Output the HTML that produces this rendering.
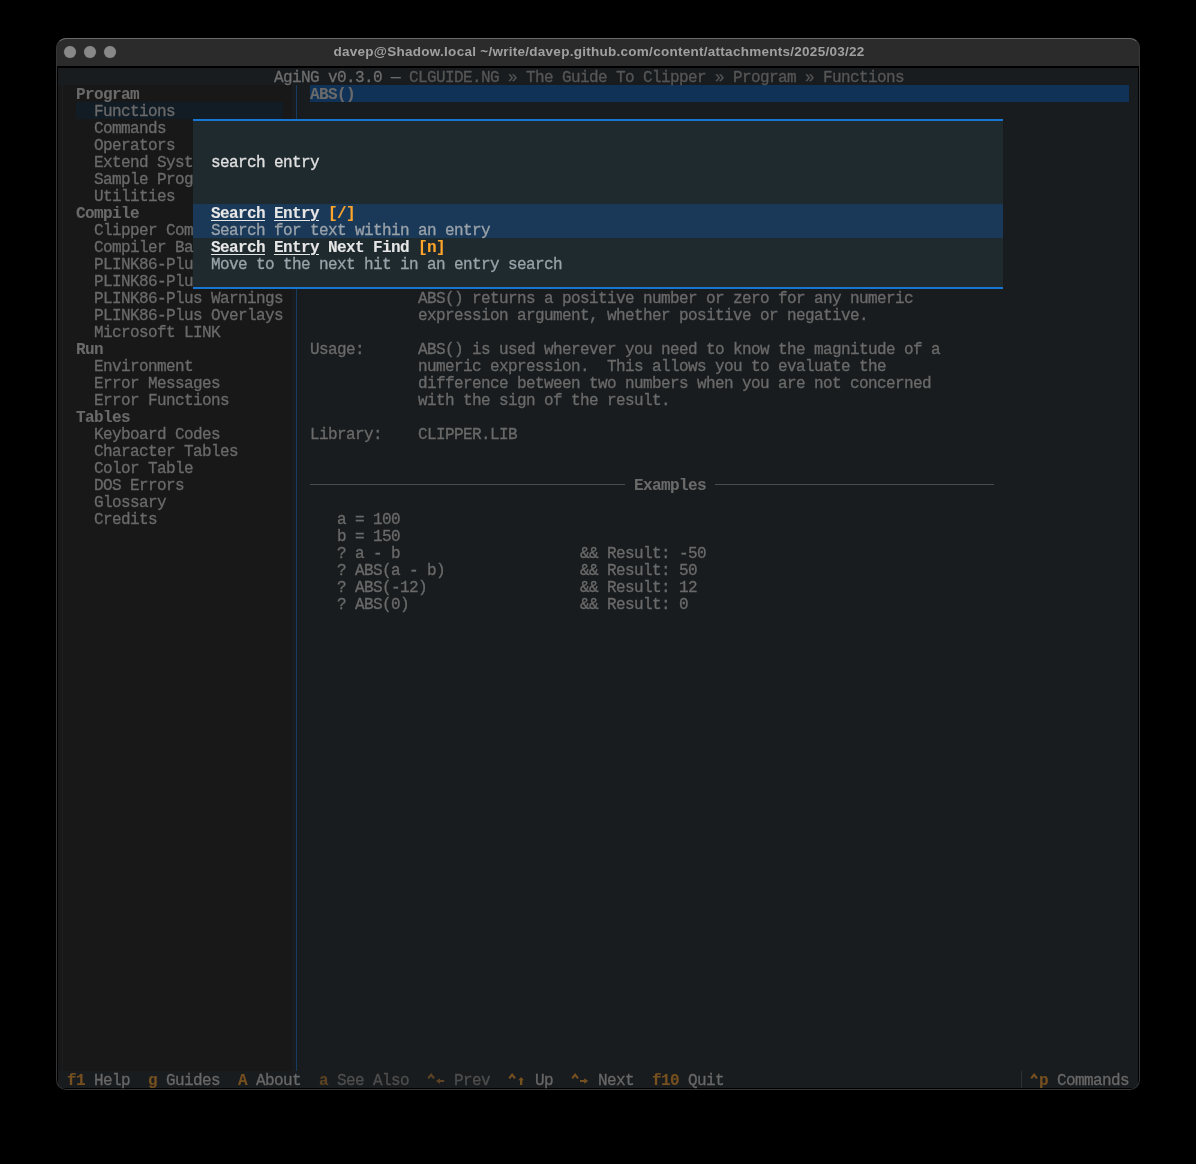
<!DOCTYPE html>
<html><head><meta charset="utf-8"><style>
html,body{margin:0;padding:0;background:#000;width:1196px;height:1164px;overflow:hidden;}
.a{position:absolute;}
.t{position:absolute;font-family:"Liberation Mono",monospace;font-size:16px;letter-spacing:-0.6px;line-height:17px;height:17px;white-space:pre;-webkit-text-stroke:0.3px currentColor;}
.b{font-weight:bold;-webkit-text-stroke-width:0.1px;}
.u{text-decoration:underline;text-underline-offset:2px;text-decoration-thickness:1px;}
.win{position:absolute;left:56px;top:38px;width:1084px;height:1052px;border-radius:10px;overflow:hidden;background:#000;will-change:transform;}
.tb{position:absolute;left:0;top:0;width:1084px;height:28px;background:#2b2b2b;}
.title{position:absolute;left:1px;top:0;width:1084px;height:28px;line-height:28px;text-align:center;font-family:"Liberation Sans",sans-serif;font-weight:bold;font-size:13.5px;letter-spacing:0.27px;color:#a0a0a0;}
.dot{position:absolute;top:8px;width:12px;height:12px;border-radius:50%;background:#888888;box-shadow:0 0 0 0.5px #3a3a3a;}
.frame{position:absolute;left:56px;top:38px;width:1084px;height:1052px;border-radius:10px;box-sizing:border-box;border:1px solid #363636;border-top-color:#6a6a6a;border-bottom-color:#333;pointer-events:none;}
</style></head><body>
<div class="win">
<div class="tb"></div>
<div class="title">davep@Shadow.local ~/write/davep.github.com/content/attachments/2025/03/22</div>
<div class="dot" style="left:8px"></div><div class="dot" style="left:28px"></div><div class="dot" style="left:48px"></div>
</div>

<div id="term" style="position:absolute;left:0;top:0;width:1196px;height:1164px;will-change:transform;clip-path:inset(38px 56px 74px 56px round 10px)">
<div class="a" style="left:58px;top:68px;width:1080px;height:17px;background:#191c1f"></div>
<div class="a" style="left:58px;top:85px;width:234px;height:986px;background:#181818"></div>
<div class="a" style="left:292px;top:85px;width:846px;height:986px;background:#191c1e"></div>
<div class="a" style="left:58px;top:1071px;width:1080px;height:17px;background:#191c1f"></div>
<div class="a" style="left:76px;top:102px;width:207px;height:17px;background:#121c25"></div>
<div class="a" style="left:310px;top:85px;width:819px;height:17px;background:#0f3256"></div>
<div class="a" style="left:296px;top:85px;width:1px;height:986px;background:#173a5e"></div>
<div class="a" style="left:62px;top:85px;width:1px;height:986px;background:#1c1f22"></div>
<div class="a" style="left:1021px;top:1071px;width:1px;height:17px;background:#2c2f33"></div>
<div class="a" style="left:310px;top:484px;width:315px;height:1px;background:#4a4d50"></div>
<div class="a" style="left:715px;top:484px;width:279px;height:1px;background:#4a4d50"></div>
<div class="a" style="left:193px;top:119px;width:810px;height:170px;background:#1f2a2f"></div>
<div class="a" style="left:193px;top:204px;width:810px;height:34px;background:#1a3958"></div>
<div class="a" style="left:193px;top:119px;width:810px;height:2px;background:#1676d2"></div>
<div class="a" style="left:193px;top:287px;width:810px;height:2px;background:#1676d2"></div>
<div class="t" style="left:274px;top:70px;color:#6e6e6e">AgiNG v0.3.0 — </div>
<div class="t" style="left:409px;top:70px;color:#565656">CLGUIDE.NG » The Guide To Clipper » Program » Functions</div>
<div class="t b" style="left:76px;top:87px;color:#6a6a6a">Program</div>
<div class="t" style="left:76px;top:104px;color:#6a6a6a">  Functions</div>
<div class="t" style="left:76px;top:121px;color:#6a6a6a">  Commands</div>
<div class="t" style="left:76px;top:138px;color:#6a6a6a">  Operators</div>
<div class="t" style="left:76px;top:155px;color:#6a6a6a">  Extend Syst</div>
<div class="t" style="left:76px;top:172px;color:#6a6a6a">  Sample Prog</div>
<div class="t" style="left:76px;top:189px;color:#6a6a6a">  Utilities</div>
<div class="t b" style="left:76px;top:206px;color:#6a6a6a">Compile</div>
<div class="t" style="left:76px;top:223px;color:#6a6a6a">  Clipper Com</div>
<div class="t" style="left:76px;top:240px;color:#6a6a6a">  Compiler Ba</div>
<div class="t" style="left:76px;top:257px;color:#6a6a6a">  PLINK86-Plu</div>
<div class="t" style="left:76px;top:274px;color:#6a6a6a">  PLINK86-Plu</div>
<div class="t" style="left:76px;top:291px;color:#6a6a6a">  PLINK86-Plus Warnings</div>
<div class="t" style="left:76px;top:308px;color:#6a6a6a">  PLINK86-Plus Overlays</div>
<div class="t" style="left:76px;top:325px;color:#6a6a6a">  Microsoft LINK</div>
<div class="t b" style="left:76px;top:342px;color:#6a6a6a">Run</div>
<div class="t" style="left:76px;top:359px;color:#6a6a6a">  Environment</div>
<div class="t" style="left:76px;top:376px;color:#6a6a6a">  Error Messages</div>
<div class="t" style="left:76px;top:393px;color:#6a6a6a">  Error Functions</div>
<div class="t b" style="left:76px;top:410px;color:#6a6a6a">Tables</div>
<div class="t" style="left:76px;top:427px;color:#6a6a6a">  Keyboard Codes</div>
<div class="t" style="left:76px;top:444px;color:#6a6a6a">  Character Tables</div>
<div class="t" style="left:76px;top:461px;color:#6a6a6a">  Color Table</div>
<div class="t" style="left:76px;top:478px;color:#6a6a6a">  DOS Errors</div>
<div class="t" style="left:76px;top:495px;color:#6a6a6a">  Glossary</div>
<div class="t" style="left:76px;top:512px;color:#6a6a6a">  Credits</div>
<div class="t b" style="left:310px;top:87px;color:#6a6a6a">ABS()</div>
<div class="t" style="left:310px;top:291px;color:#6a6a6a">            ABS() returns a positive number or zero for any numeric</div>
<div class="t" style="left:310px;top:308px;color:#6a6a6a">            expression argument, whether positive or negative.</div>
<div class="t" style="left:310px;top:342px;color:#6a6a6a">Usage:      ABS() is used wherever you need to know the magnitude of a</div>
<div class="t" style="left:310px;top:359px;color:#6a6a6a">            numeric expression.  This allows you to evaluate the</div>
<div class="t" style="left:310px;top:376px;color:#6a6a6a">            difference between two numbers when you are not concerned</div>
<div class="t" style="left:310px;top:393px;color:#6a6a6a">            with the sign of the result.</div>
<div class="t" style="left:310px;top:427px;color:#6a6a6a">Library:    CLIPPER.LIB</div>
<div class="t" style="left:310px;top:512px;color:#6a6a6a">   a = 100</div>
<div class="t" style="left:310px;top:529px;color:#6a6a6a">   b = 150</div>
<div class="t" style="left:310px;top:546px;color:#6a6a6a">   ? a - b                    &amp;&amp; Result: -50</div>
<div class="t" style="left:310px;top:563px;color:#6a6a6a">   ? ABS(a - b)               &amp;&amp; Result: 50</div>
<div class="t" style="left:310px;top:580px;color:#6a6a6a">   ? ABS(-12)                 &amp;&amp; Result: 12</div>
<div class="t" style="left:310px;top:597px;color:#6a6a6a">   ? ABS(0)                   &amp;&amp; Result: 0</div>
<div class="t b" style="left:634px;top:478px;color:#6a6a6a">Examples</div>
<div class="t b" style="left:67px;top:1073px;color:#76501f">f1</div>
<div class="t" style="left:94px;top:1073px;color:#686868">Help</div>
<div class="t b" style="left:148px;top:1073px;color:#76501f">g</div>
<div class="t" style="left:166px;top:1073px;color:#686868">Guides</div>
<div class="t b" style="left:238px;top:1073px;color:#76501f">A</div>
<div class="t" style="left:256px;top:1073px;color:#686868">About</div>
<div class="t b" style="left:319px;top:1073px;color:#5e4424">a</div>
<div class="t" style="left:337px;top:1073px;color:#4e4e4e">See Also</div>
<div class="t" style="left:454px;top:1073px;color:#4e4e4e">Prev</div>
<div class="t" style="left:535px;top:1073px;color:#686868">Up</div>
<div class="t" style="left:598px;top:1073px;color:#686868">Next</div>
<div class="t b" style="left:652px;top:1073px;color:#76501f">f10</div>
<div class="t" style="left:688px;top:1073px;color:#686868">Quit</div>
<div class="t b" style="left:1039px;top:1073px;color:#76501f">p</div>
<div class="t" style="left:1057px;top:1073px;color:#686868">Commands</div>
<div class="t" style="left:211px;top:155px;color:#e0e0e0">search entry</div>
<div class="t b u" style="left:211px;top:206px;color:#e6e6e6">Search</div>
<div class="t b u" style="left:274px;top:206px;color:#e6e6e6">Entry</div>
<div class="t b" style="left:328px;top:206px;color:#ffa62b">[/]</div>
<div class="t" style="left:211px;top:223px;color:#9aa2aa">Search for text within an entry</div>
<div class="t b u" style="left:211px;top:240px;color:#e6e6e6">Search</div>
<div class="t b u" style="left:274px;top:240px;color:#e6e6e6">Entry</div>
<div class="t b" style="left:328px;top:240px;color:#e6e6e6">Next Find</div>
<div class="t b" style="left:418px;top:240px;color:#ffa62b">[n]</div>
<div class="t" style="left:211px;top:257px;color:#9aa2aa">Move to the next hit in an entry search</div>
<svg class="a" style="left:427px;top:1071px" width="9" height="17"><polyline points="1.2,7.3 4.1,3.7 7.0,7.3" fill="none" stroke="#5e4424" stroke-width="2.1" stroke-linejoin="miter"/></svg>
<svg class="a" style="left:436px;top:1071px" width="9" height="17"><polygon points="0,10 4,7.2 4,12.8" fill="#5e4424"/><rect x="3.5" y="9" width="4.7" height="2" fill="#5e4424"/></svg>
<svg class="a" style="left:508px;top:1071px" width="9" height="17"><polyline points="1.2,7.3 4.1,3.7 7.0,7.3" fill="none" stroke="#76501f" stroke-width="2.1" stroke-linejoin="miter"/></svg>
<svg class="a" style="left:517px;top:1071px" width="9" height="17"><polygon points="4.1,6 1.3,9.2 6.9,9.2" fill="#76501f"/><rect x="3" y="8.5" width="2.3" height="5.5" fill="#76501f"/></svg>
<svg class="a" style="left:571px;top:1071px" width="9" height="17"><polyline points="1.2,7.3 4.1,3.7 7.0,7.3" fill="none" stroke="#76501f" stroke-width="2.1" stroke-linejoin="miter"/></svg>
<svg class="a" style="left:580px;top:1071px" width="9" height="17"><polygon points="8.2,10 4.2,7.2 4.2,12.8" fill="#76501f"/><rect x="0" y="9" width="4.7" height="2" fill="#76501f"/></svg>
<svg class="a" style="left:1030px;top:1071px" width="9" height="17"><polyline points="1.2,7.3 4.1,3.7 7.0,7.3" fill="none" stroke="#76501f" stroke-width="2.1" stroke-linejoin="miter"/></svg>
</div>
<div class="frame"></div>
</body></html>
